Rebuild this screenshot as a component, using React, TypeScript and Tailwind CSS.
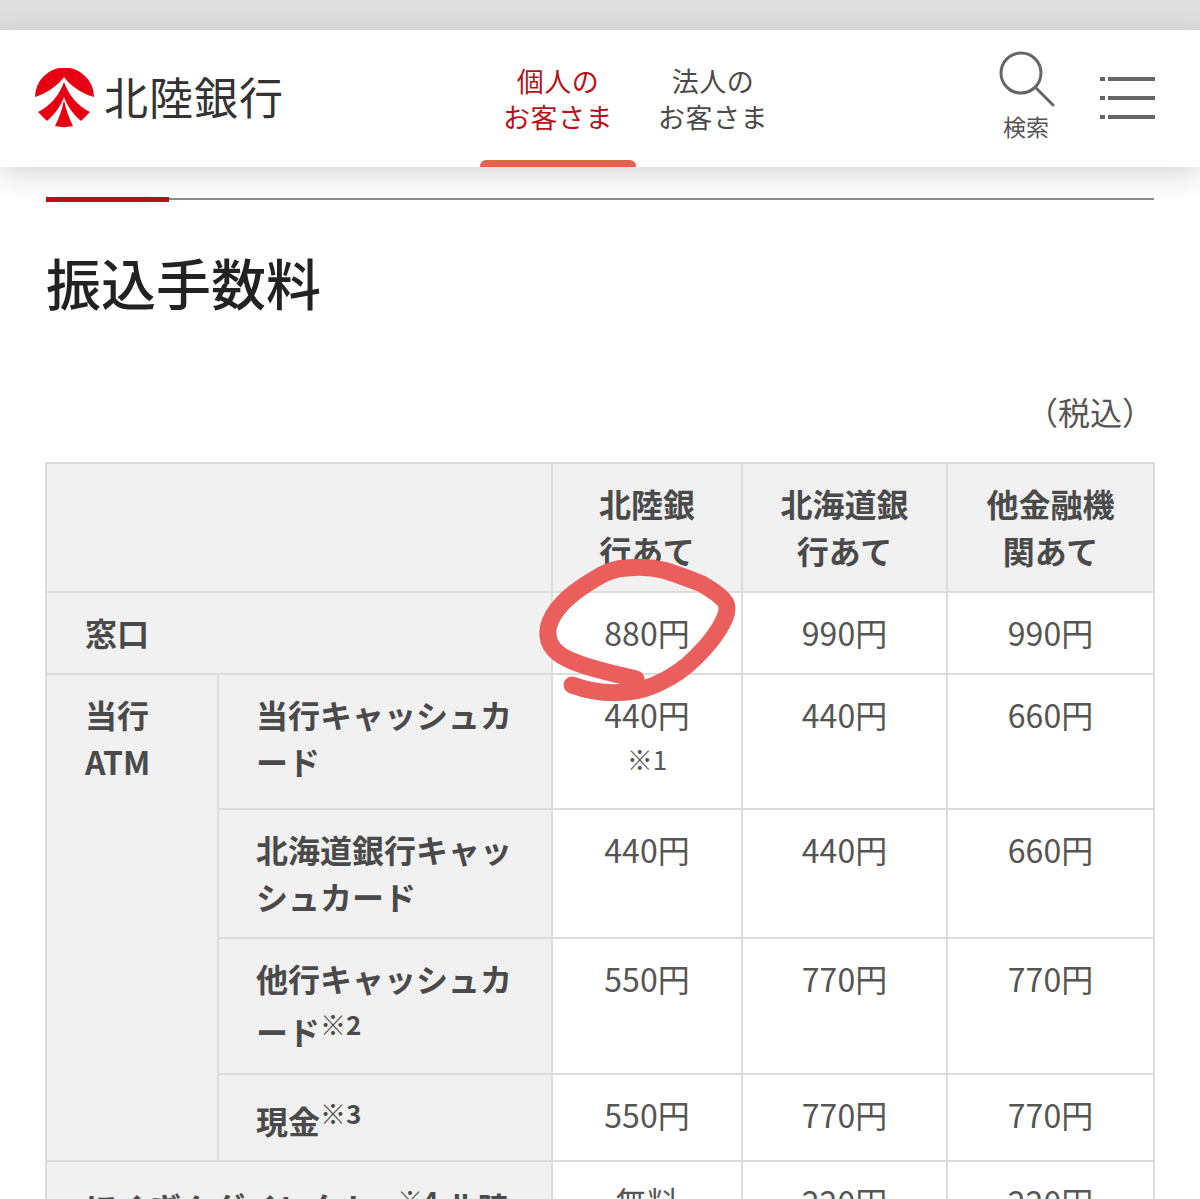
const sans = "font-['Noto_Sans_CJK_JP','Noto_Sans',sans-serif]";

const th = "border-2 border-[#dcdcdc] bg-[#f1f1f1] font-bold text-[#4a4a4a] align-top";
const td = "border-2 border-[#dcdcdc] bg-white text-center align-top text-[#555555] font-normal";

function Sup({ children, className = "" }: { children: string; className?: string }) {
  return (
    <sup className={"relative top-0 text-[26px] leading-[44px] font-bold align-[10px] text-[#4a4a4a] " + className}>
      {children}
    </sup>
  );
}

function Logo() {
  return (
    <div className="flex items-center gap-[10px]">
      <svg width="60" height="60" viewBox="0 0 60 60" className="mt-[1px] shrink-0">
        <path d="M1 29 A29.5 29.5 0 0 1 60 29 C50 26 38 20 30 9 C22 20 10 26 1 29 Z" fill="#e60012" />
        <path d="M4 44 C16 38 25 28 30 14 C35 28 44 38 56 44 L47 53 C40 47 33 38 30 29 C27 38 20 47 13 53 Z" fill="#e60012" />
        <path d="M21 58 C25 50 28 42 30 32 C32 42 35 50 39 58 C33 59.5 27 59.5 21 58 Z" fill="#e60012" />
      </svg>
      <span className="mb-[3px] text-[44px] leading-none tracking-[1px] text-[#333333] font-normal whitespace-nowrap">北陸銀行</span>
    </div>
  );
}

function Nav() {
  return (
    <header className="relative z-10 flex h-[137px] bg-white pl-[34px] pr-[45px] shadow-[0_8px_28px_rgba(0,0,0,0.16)]">
      <div className="flex w-[446px] items-center pb-[2px]">
        <Logo />
      </div>
      <div className="relative flex w-[156px] flex-col items-center justify-center text-[27px] leading-[36px] tracking-[0.5px] text-[#b5121b]">
        <span>個人の</span>
        <span>お客さま</span>
        <div className="absolute bottom-0 left-0 h-[7px] w-full rounded-t-[6px] bg-[#e8604e]" />
      </div>
      <div className="flex w-[154px] flex-col items-center justify-center text-[27px] leading-[36px] tracking-[0.5px] text-[#4a4a4a]">
        <span>法人の</span>
        <span>お客さま</span>
      </div>
      <div className="ml-auto flex items-start">
        <div className="flex w-[60px] flex-col items-center pt-[21px]">
          <svg width="56" height="56" viewBox="0 0 56 56" fill="none" stroke="#666666" strokeWidth="3" strokeLinecap="round" className="ml-[2px]">
            <circle cx="22" cy="22" r="20" />
            <path d="M37 37 L54 54" />
          </svg>
          <span className="mt-[4px] text-[23px] leading-[30px] text-[#555555]">検索</span>
        </div>
        <div className="ml-[44px] flex w-[55px] flex-col gap-[15px] pt-[47px]">
          {[0, 1, 2].map((i) => (
            <div key={i} className="flex gap-[3px]">
              <div className="h-[4px] w-[5px] bg-[#666666]" />
              <div className="h-[4px] flex-1 bg-[#666666]" />
            </div>
          ))}
        </div>
      </div>
    </header>
  );
}

function Amount({ value, note }: { value: string; note?: string }) {
  return (
    <td className={td + " pt-[16px] text-[32px] leading-[47px]"}>
      {value}
      {note && <div className="mt-[3px] text-[26px] leading-[36px]">{note}</div>}
    </td>
  );
}

function FeeTable() {
  return (
    <table className="w-[1108px] table-fixed border-collapse text-[32px] leading-[47px]">
      <colgroup>
        <col className="w-[172px]" />
        <col className="w-[334px]" />
        <col className="w-[190px]" />
        <col className="w-[205px]" />
        <col className="w-[207px]" />
      </colgroup>
      <tbody>
        <tr className="h-[129px]">
          <th colSpan={2} className={th} />
          <th className={th + " px-[45px] pt-[16px]"}>北陸銀行あて</th>
          <th className={th + " px-[36px] pt-[16px]"}>北海道銀行あて</th>
          <th className={th + " px-[36px] pt-[16px]"}>他金融機関あて</th>
        </tr>
        <tr className="h-[82px]">
          <th colSpan={2} className={th + " pl-[38px] pt-[16px] text-left"}>窓口</th>
          <Amount value="880円" />
          <Amount value="990円" />
          <Amount value="990円" />
        </tr>
        <tr className="h-[135px]">
          <th rowSpan={4} className={th + " pl-[38px] pt-[16px] text-left"}>当行<br />ATM</th>
          <th className={th + " pl-[37px] pr-[30px] pt-[16px] text-left"}>当行キャッシュカード</th>
          <Amount value="440円" note="※1" />
          <Amount value="440円" />
          <Amount value="660円" />
        </tr>
        <tr className="h-[129px]">
          <th className={th + " pl-[37px] pr-[30px] pt-[16px] text-left"}>北海道銀行キャッシュカード</th>
          <Amount value="440円" />
          <Amount value="440円" />
          <Amount value="660円" />
        </tr>
        <tr className="h-[136px]">
          <th className={th + " pl-[37px] pr-[30px] pt-[16px] text-left"}>他行キャッシュカード<Sup>※2</Sup></th>
          <Amount value="550円" />
          <Amount value="770円" />
          <Amount value="770円" />
        </tr>
        <tr className="h-[87px]">
          <th className={th + " pl-[37px] pr-[30px] pt-[16px] text-left"}>現金<Sup>※3</Sup></th>
          <Amount value="550円" />
          <Amount value="770円" />
          <Amount value="770円" />
        </tr>
        <tr className="h-[90px]">
          <th colSpan={2} className={th + " pl-[38px] pt-[16px] text-left whitespace-nowrap"}>ほくぎんダイレクト<Sup className="ml-[24px]">※4</Sup> 北陸</th>
          <Amount value="無料" />
          <Amount value="220円" />
          <Amount value="220円" />
        </tr>
      </tbody>
    </table>
  );
}

export default function App() {
  return (
    <div className={sans + " relative h-[1199px] w-[1200px] overflow-hidden bg-white"}>
      <div className="h-[30px] bg-[#dedede]" />
      <Nav />
      <main className="px-[46px] pt-[30px]">
        <div className="flex h-[6px] items-start">
          <div className="h-[5px] w-[123px] bg-[#b5121b]" />
          <div className="mt-[1px] h-[2px] flex-1 bg-[#8c8c8c]" />
        </div>
        <h1 className="mt-[38px] text-[55px] leading-[80px] font-medium text-[#222222]">振込手数料</h1>
        <p className="mt-[67px] text-right text-[32px] leading-[47px] text-[#555555]">（税込）</p>
        <div className="mt-[27px] -ml-[1px]">
          <FeeTable />
        </div>
      </main>
      {/* hand-drawn marker circle over the table */}
      <svg className="absolute left-[530px] top-[550px]" width="220" height="160" viewBox="0 0 220 160" fill="none">
        <path
          d="M106 129 C85 124 50 117 32 106 C18 97 15 85 20 72 C28 52 50 38 63 30 C75 22 85 18 97 18 C112 16 125 18 133 20 C150 25 162 30 172 34 C187 43 197 50 197 58 C197 66 193 72 189 79 C180 94 173 100 164 109 C153 120 145 125 133 131 C120 138 110 141 97 142 C78 144 58 141 42 135"
          stroke="#ea5f5c"
          strokeWidth="17"
          strokeLinecap="round"
          strokeLinejoin="round"
        />
      </svg>
    </div>
  );
}
